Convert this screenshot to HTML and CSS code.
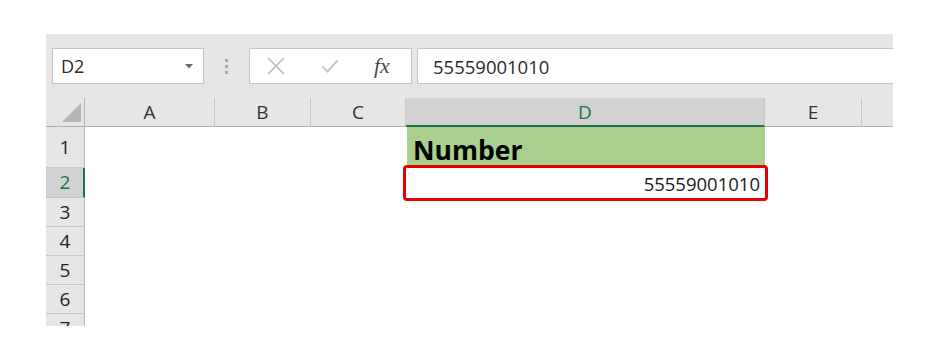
FILE: index.html
```html
<!DOCTYPE html>
<html>
<head>
<meta charset="utf-8">
<link rel="stylesheet" href="styles.css">
</head>
<body>
<div class="app">
  <div class="fbar">
    <div class="namebox">
      <span>D2</span>
      <svg class="caret" width="8" height="5" viewBox="0 0 8 5"><path d="M0 0H8L4 4.5Z" fill="#6a6a6a"/></svg>
    </div>
    <div class="grip"><i></i><i></i><i></i></div>
    <div class="btns">
      <svg class="ico" width="20" height="20" viewBox="0 0 20 20"><path d="M2 2L18 18M18 2L2 18" stroke="#bdbdbd" stroke-width="1.7" fill="none"/></svg>
      <svg class="ico" width="20" height="20" viewBox="0 0 20 20"><path d="M2.5 10.5L7.5 15.5L17.5 4.5" stroke="#c8c8c8" stroke-width="2" fill="none"/></svg>
      <span class="fx">fx</span>
    </div>
    <div class="finput">55559001010</div>
  </div>
  <div class="sheet">
    <div class="corner"><span class="tri"></span></div>
    <div class="ch">A</div>
    <div class="ch">B</div>
    <div class="ch">C</div>
    <div class="ch sel">D</div>
    <div class="ch">E</div>
    <div class="ch last"></div>

    <div class="rh">1</div>
    <div class="c"></div><div class="c"></div><div class="c"></div>
    <div class="c head">Number</div>
    <div class="c"></div><div class="c"></div>

    <div class="rh sel">2</div>
    <div class="c"></div><div class="c"></div><div class="c"></div>
    <div class="c val">55559001010</div>
    <div class="c"></div><div class="c"></div>

    <div class="rh">3</div>
    <div class="c"></div><div class="c"></div><div class="c"></div><div class="c"></div><div class="c"></div><div class="c"></div>
    <div class="rh">4</div>
    <div class="c"></div><div class="c"></div><div class="c"></div><div class="c"></div><div class="c"></div><div class="c"></div>
    <div class="rh">5</div>
    <div class="c"></div><div class="c"></div><div class="c"></div><div class="c"></div><div class="c"></div><div class="c"></div>
    <div class="rh">6</div>
    <div class="c"></div><div class="c"></div><div class="c"></div><div class="c"></div><div class="c"></div><div class="c"></div>
    <div class="rh cut">7</div>
    <div class="c"></div><div class="c"></div><div class="c"></div><div class="c"></div><div class="c"></div><div class="c"></div>
  </div>
</div>
</body>
</html>
```

FILE: styles.css
```css
html, body {
  margin: 0;
  padding: 0;
  background: #ffffff;
}

.app {
  margin: 34px 0 0 46px;
  width: 847px;
  font-family: "Open Sans", "Noto Sans", sans-serif;
}

.fbar {
  display: flex;
  align-items: stretch;
  height: 64px;
  box-sizing: border-box;
  padding: 14px 0 14px 6px;
  background: #e6e6e6;
}

.namebox {
  width: 152px;
  box-sizing: border-box;
  background: #fff;
  border: 1px solid #c6c6c6;
  display: flex;
  align-items: center;
  justify-content: space-between;
  padding: 0 10px 0 8px;
  font-size: 18px;
  color: #2b2b2b;
}

.caret {
  display: block;
}

.grip {
  width: 45px;
  display: flex;
  flex-direction: column;
  align-items: center;
  justify-content: center;
  gap: 3px;
}

.grip i {
  display: block;
  width: 3px;
  height: 3px;
  background: #a8a8a8;
}

.btns {
  width: 163px;
  box-sizing: border-box;
  background: #fff;
  border: 1px solid #c6c6c6;
  display: flex;
  align-items: center;
  padding: 0 0 0 16px;
  gap: 34px;
}

.ico {
  display: block;
}

.fx {
  font-family: "Liberation Serif", "DejaVu Serif", serif;
  font-style: italic;
  font-size: 22px;
  color: #4a4a4a;
  line-height: 1;
}

.finput {
  flex: 1;
  margin-left: 5px;
  background: #fff;
  border: 1px solid #c6c6c6;
  border-right: none;
  display: flex;
  align-items: center;
  padding-left: 15px;
  font-size: 18.5px;
  color: #2b2b2b;
}

.sheet {
  display: grid;
  grid-template-columns: 39px 130px 96px 95px 359px 97px 31px;
  grid-template-rows: 29px 41px 30px 29px 29px 29px 29px 12px;
  font-size: 19px;
}

.corner {
  background: #e6e6e6;
  border-right: 1px solid #b8b8b8;
  border-bottom: 1px solid #b0b0b0;
  box-sizing: border-box;
  display: flex;
  align-items: flex-end;
  justify-content: flex-end;
  padding: 0 3px 4px 0;
}

.tri {
  display: block;
  width: 0;
  height: 0;
  border-left: 19px solid transparent;
  border-bottom: 19px solid #b5b5b5;
}

.ch {
  background: #e6e6e6;
  border-right: 1px solid #c8c8c8;
  border-bottom: 1px solid #b0b0b0;
  box-sizing: border-box;
  display: flex;
  align-items: center;
  justify-content: center;
  color: #333;
  line-height: 1;
  padding-top: 1px;
}

.ch.last {
  border-right: none;
}

.ch.sel {
  background: #d2d2d2;
  color: #217346;
  border-bottom: 2px solid #217346;
  padding-top: 2px;
}

.rh {
  background: #e6e6e6;
  border-right: 1px solid #b8b8b8;
  border-bottom: 1px solid #c8c8c8;
  box-sizing: border-box;
  display: flex;
  align-items: center;
  justify-content: center;
  color: #222;
  line-height: 1;
  overflow: hidden;
}

.rh.sel {
  background: #d2d2d2;
  color: #217346;
  border-right: 2px solid #217346;
  padding-left: 1px;
}

.rh.cut {
  align-items: flex-start;
  border-bottom: none;
  padding-top: 5px;
}

.c {
  background: #fff;
}

.head {
  background: #a9d08e;
  font-weight: 700;
  font-size: 26.5px;
  color: #000;
  display: flex;
  align-items: flex-end;
  padding: 0 0 1px 6px;
  line-height: 1.3;
  margin-left: 1px;
}

.val {
  position: relative;
  z-index: 1;
  display: flex;
  align-items: center;
  justify-content: flex-end;
  padding: 1px 5px 0 0;
  font-size: 18.5px;
  color: #1a1a1a;
  outline: 3px solid #e60000;
  border-radius: 1px;
}
```
